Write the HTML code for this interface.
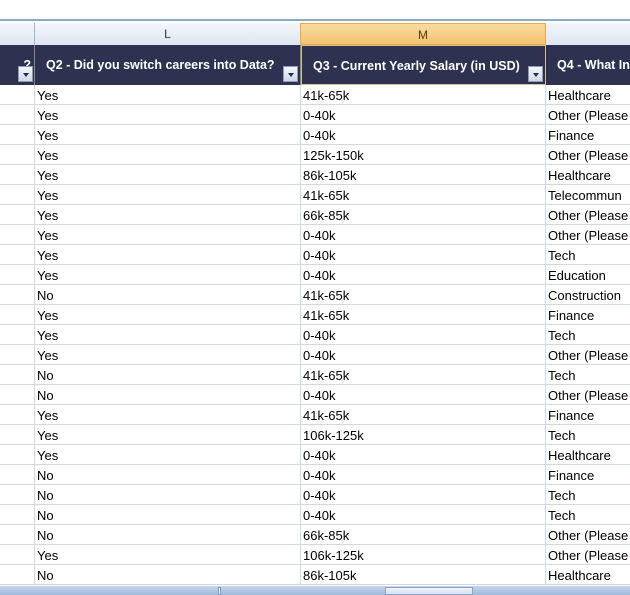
<!DOCTYPE html><html><head><style>
*{margin:0;padding:0;box-sizing:border-box}
body{width:630px;height:595px;overflow:hidden;background:#fff;font-family:"Liberation Sans",sans-serif;position:relative}
.abs{position:absolute}
.ch{top:23px;height:22px;background:linear-gradient(#f4f7fb,#dde6f1);border-right:1px solid #9eb6ce;font-size:12px;color:#333;text-align:center;line-height:22px}
.hd{top:45px;height:40px;background:#2e3250;color:#fff;font-weight:bold;font-size:12.5px;line-height:40px;white-space:nowrap;overflow:hidden;border-right:1px solid #8a8a70}
.dd{width:15px;height:16px;top:66px;background:linear-gradient(#f4f6fa,#cfd8e6);border:1px solid #8d9db5}
.dd:after{content:"";position:absolute;left:4px;top:6px;border-left:3px solid transparent;border-right:3px solid transparent;border-top:4px solid #1d2c52}
.row{position:absolute;left:0;width:630px;height:20px;border-bottom:1px solid #d0d7e5;font-size:13px;line-height:21px;color:#000}
.row span{position:absolute;white-space:nowrap;overflow:hidden}
.v{position:absolute;top:85px;height:500px;width:1px;background:#d0d7e5}
</style></head><body>
<div class="abs" style="left:0;top:19px;width:630px;height:2px;background:#8fa9c9"></div>
<div class="abs ch" style="left:0;width:35px"></div>
<div class="abs ch" style="left:35px;width:266px">L</div>
<div class="abs ch" style="left:300px;width:246px;background:linear-gradient(#f9dc9f,#f2c272);border:1px solid #f0a844;color:#5a3d0a">M</div>
<div class="abs ch" style="left:546px;width:84px;border:none"></div>
<div class="abs hd" style="left:0;width:35px;text-align:right;padding-right:3px">?</div>
<div class="abs hd" style="left:35px;width:266px;padding-left:11px">Q2 - Did you switch careers into Data?</div>
<div class="abs hd" style="left:301px;width:245px;padding-left:11px;border:1px solid #c8c39a">Q3 - Current Yearly Salary (in USD)</div>
<div class="abs hd" style="left:546px;width:84px;padding-left:11px;border:none">Q4 - What Industry</div>
<div class="abs dd" style="left:18px"></div>
<div class="abs dd" style="left:283px"></div>
<div class="abs dd" style="left:528px"></div>
<div id="rows"></div>
<div class="v" style="left:34px"></div><div class="v" style="left:300px"></div><div class="v" style="left:545px"></div>
<div class="abs" style="left:0;top:586px;width:630px;height:9px;background:linear-gradient(#c5d6ec,#9fb9dc)"></div>
<div class="abs" style="left:218px;top:587px;width:3px;height:8px;background:#fff;border:1px solid #7d98c0"></div>
<div class="abs" style="left:385px;top:587px;width:88px;height:8px;background:linear-gradient(#f3f6fb,#d3dff0);border:1px solid #8aa3c8"></div>
<script>
var d=[["Yes","41k-65k","Healthcare"],["Yes","0-40k","Other (Please"],["Yes","0-40k","Finance"],["Yes","125k-150k","Other (Please"],["Yes","86k-105k","Healthcare"],["Yes","41k-65k","Telecommun"],["Yes","66k-85k","Other (Please"],["Yes","0-40k","Other (Please"],["Yes","0-40k","Tech"],["Yes","0-40k","Education"],["No","41k-65k","Construction"],["Yes","41k-65k","Finance"],["Yes","0-40k","Tech"],["Yes","0-40k","Other (Please"],["No","41k-65k","Tech"],["No","0-40k","Other (Please"],["Yes","41k-65k","Finance"],["Yes","106k-125k","Tech"],["Yes","0-40k","Healthcare"],["No","0-40k","Finance"],["No","0-40k","Tech"],["No","0-40k","Tech"],["No","66k-85k","Other (Please"],["Yes","106k-125k","Other (Please"],["No","86k-105k","Healthcare"]];
var h="";d.forEach(function(r,i){h+='<div class="row" style="top:'+(85+i*20)+'px"><span style="left:37px">'+r[0]+'</span><span style="left:303px">'+r[1]+'</span><span style="left:548px">'+r[2]+'</span></div>'});
document.getElementById("rows").innerHTML=h;
</script>
</body></html>
